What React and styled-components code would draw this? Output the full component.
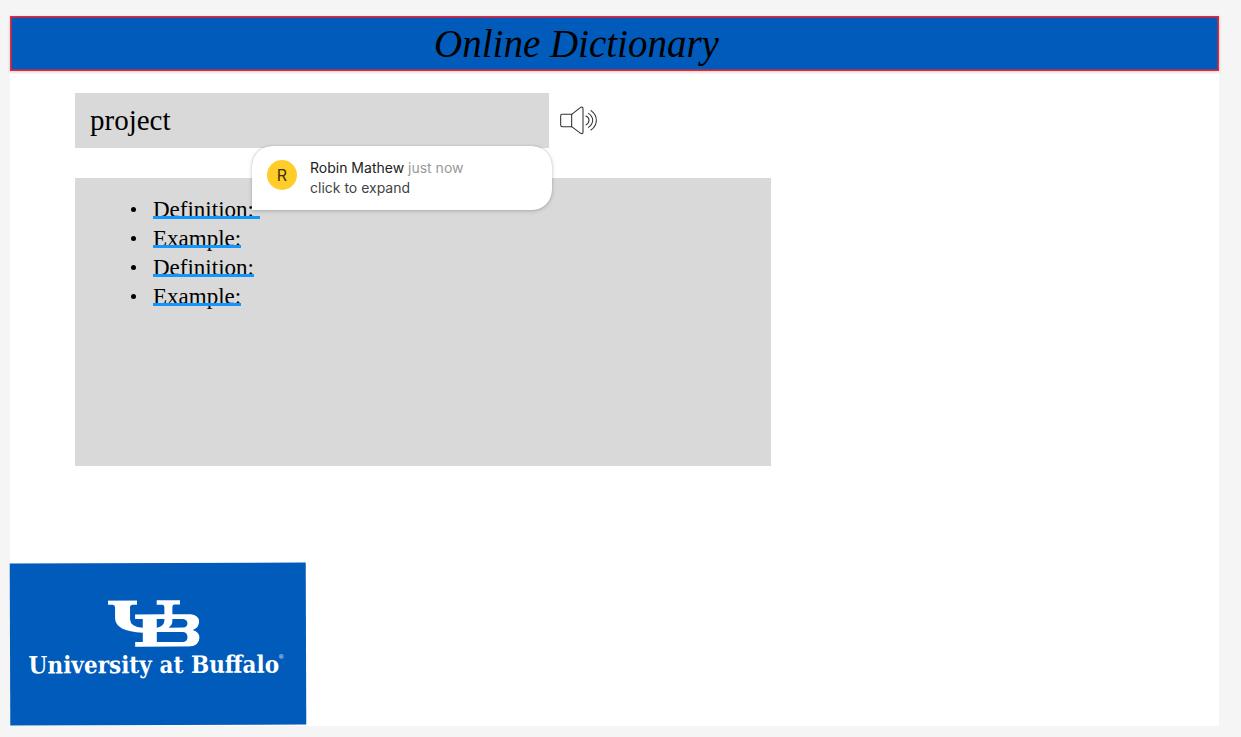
import React from 'react';
import styled, { createGlobalStyle } from 'styled-components';

const GlobalStyle = createGlobalStyle`
  *, *::before, *::after { box-sizing: border-box; }
  body { margin: 0; background: #f5f5f5; }
`;

const serif = '"Liberation Serif", "Times New Roman", serif';

const Page = styled.div`
  display: flex;
  min-height: 100vh;
  padding: 16px 22px 11px 10px;
`;

const Frame = styled.div`
  flex: 1;
  min-width: 0;
  display: flex;
  flex-direction: column;
  background: #fff;
`;

const Header = styled.header`
  display: flex;
  justify-content: center;
  align-items: center;
  height: 55px;
  padding-right: 76px;
  border: 1px solid #ff1f2a;
  outline: 1px solid rgba(255, 31, 42, 0.5);
  outline-offset: -2px;
  background: #005bbb;
  box-shadow: 0 1px 3px rgba(0, 0, 0, 0.2);
`;

const Title = styled.h1`
  margin: 0;
  font: italic 400 39px/48px ${serif};
  color: #000;
  white-space: nowrap;
`;

const Main = styled.main`
  display: flex;
  flex-direction: column;
  gap: 30px;
  padding: 22px 65px 32px;
`;

const SearchRow = styled.div`
  display: flex;
  align-items: center;
  gap: 11px;
`;

const WordInput = styled.input`
  flex: 0 1 474px;
  min-width: 0;
  height: 55px;
  padding: 0 15px;
  border: 0;
  border-radius: 0;
  background: #d9d9d9;
  color: #000;
  font: 400 29px/36px ${serif};
`;

const SpeakButton = styled.button`
  display: flex;
  padding: 0;
  border: 0;
  background: none;
  cursor: pointer;
`;

const Results = styled.section`
  position: relative;
  width: 100%;
  max-width: 696px;
  min-height: 288px;
  padding: 17px 16px;
  background: #d9d9d9;
`;

const EntryList = styled.ul`
  margin: 0;
  padding-left: 62px;
  font: 400 23px/29px ${serif};
  color: #000;
`;

const Entry = styled.li`
  display: flex;
  align-items: center;
  height: 29px;
  margin-left: -22px;

  &::before {
    content: '';
    width: 5px;
    height: 5px;
    margin-right: 17px;
    border-radius: 50%;
    background: #000;
  }
`;

const EntryToggle = styled.button`
  position: relative;
  padding: 0;
  border: 0;
  background: none;
  color: inherit;
  font: inherit;
  white-space: pre;
  cursor: pointer;

  &::after {
    content: '';
    position: absolute;
    left: 0;
    right: 0;
    bottom: 5px;
    height: 3px;
    background: #1296fb;
  }
`;

const Comment = styled.aside`
  position: absolute;
  top: -32px;
  left: 177px;
  display: flex;
  gap: 13px;
  width: 300px;
  height: 64px;
  padding: 12px 15px;
  border-radius: 20px 20px 20px 0;
  background: #fff;
  box-shadow: 0 0 1px rgba(0, 0, 0, 0.3), 0 1px 4px rgba(0, 0, 0, 0.2);
  font: 400 14px/20px Inter, sans-serif;
  color: #444;
`;

const Avatar = styled.span`
  flex: none;
  width: 30px;
  height: 30px;
  margin-top: 2px;
  border-radius: 50%;
  background: #ffcd29;
  color: #3d320a;
  font-size: 16px;
  line-height: 30px;
  text-align: center;
`;

const CommentText = styled.p`
  margin: 0;
`;

const Author = styled.span`
  color: #222;
`;

const Time = styled.span`
  color: #999;
`;

const Footer = styled.footer`
  display: flex;
  margin-top: auto;
  padding-bottom: 1px;
`;

const Brand = styled.div`
  display: flex;
  flex-direction: column;
  align-items: center;
  width: 296px;
  height: 162px;
  padding: 37px 8px 0 0;
  background: #005bbb;
  color: #fff;
  transform: rotate(-0.2deg);
`;

const BrandName = styled.div`
  display: flex;
  margin-top: 2px;
  padding-left: 4px;
  font: 700 24px/32px "DejaVu Serif Condensed", "DejaVu Serif", serif;
  white-space: nowrap;
`;

const Registered = styled.span`
  font: 400 6px/16px "Liberation Sans", sans-serif;
`;

const entries = ['Definition: ', 'Example:', 'Definition:', 'Example:'];

function SpeakerIcon() {
  return (
    <svg width="38" height="30" viewBox="31 33 114 90" fill="none" stroke="#333" strokeWidth="3.2" strokeLinecap="round" strokeLinejoin="round" aria-hidden="true">
      <path d="M66 58H38Q33 58 33 63V90Q33 95 38 95H66Z" />
      <path d="M66 58L93 37Q100 34 100 41V111Q100 118 93 115L66 95" />
      <path d="M109 63Q118 67 118 76T109 89" />
      <path d="M116 55Q129 63 129 76T116 97" />
      <path d="M124 47Q140 58 140 76T124 105" />
    </svg>
  );
}

function UBLogo() {
  return (
    <svg width="92" height="47" viewBox="24 24 275 141" role="img" aria-label="UB">
      <path
        fill="#fff"
        fillRule="evenodd"
        d="M24 25H111V38H97Q90 39 90 45V82Q91 105 128 107V81H105V67H193V45Q193 39 187 38H170V25H240V38H223Q217 39 217 45V67H272Q296 69 297 89Q297 108 278 114Q298 120 298 137Q297 162 268 164H105V150H128V122Q45 117 45 78V46Q45 39 38 38H24Z
        M170 81H193V84Q193 103 170 107Z
        M217 81H249Q262 83 262 94Q262 106 249 107H206Q217 99 217 86Z
        M170 120H249Q262 122 262 135Q262 149 249 150H170Z"
      />
    </svg>
  );
}

export default function App() {
  return (
    <>
      <GlobalStyle />
      <Page>
        <Frame>
          <Header>
            <Title>Online Dictionary</Title>
          </Header>
          <Main>
            <SearchRow>
              <WordInput type="text" aria-label="Word" defaultValue="project" />
              <SpeakButton type="button" aria-label="Listen to pronunciation">
                <SpeakerIcon />
              </SpeakButton>
            </SearchRow>
            <Results>
              <EntryList>
                {entries.map((label, index) => (
                  <Entry key={index}>
                    <EntryToggle type="button">{label}</EntryToggle>
                  </Entry>
                ))}
              </EntryList>
              <Comment>
                <Avatar>R</Avatar>
                <CommentText>
                  <Author>Robin Mathew</Author> <Time>just now</Time>
                  <br />
                  click to expand
                </CommentText>
              </Comment>
            </Results>
          </Main>
          <Footer>
            <Brand>
              <UBLogo />
              <BrandName>
                University at Buffalo<Registered>®</Registered>
              </BrandName>
            </Brand>
          </Footer>
        </Frame>
      </Page>
    </>
  );
}
